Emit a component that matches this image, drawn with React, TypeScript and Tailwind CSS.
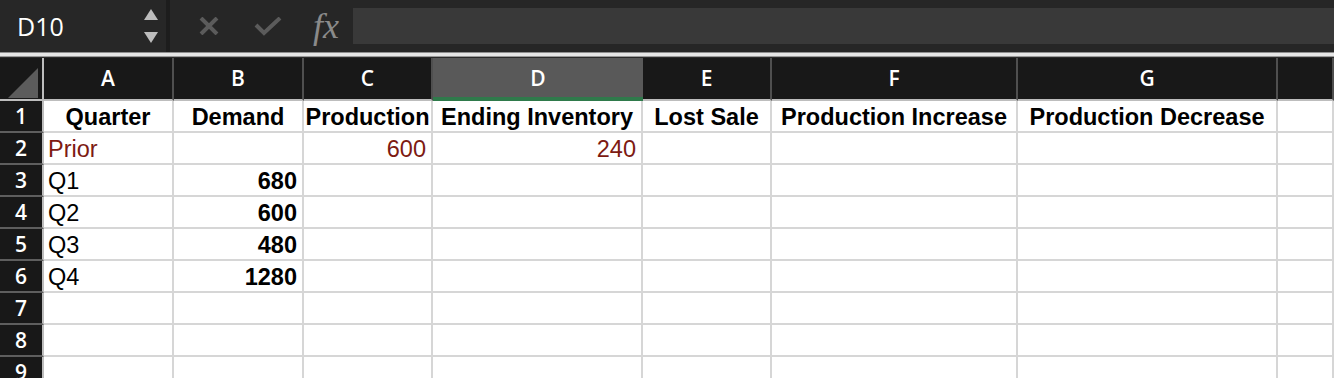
const cols = ["A", "B", "C", "D", "E", "F", "G", ""];

type Cell = { t?: string; bold?: boolean; red?: boolean; align?: "l" | "c" | "r" };

const headerRow: Cell[] = [
  "Quarter",
  "Demand",
  "Production",
  "Ending Inventory",
  "Lost Sale",
  "Production Increase",
  "Production Decrease",
  "",
].map((t) => ({ t, bold: true, align: "c" as const }));

const rows: Cell[][] = [
  headerRow,
  [{ t: "Prior", red: true }, {}, { t: "600", red: true, align: "r" }, { t: "240", red: true, align: "r" }],
  [{ t: "Q1" }, { t: "680", bold: true, align: "r" }],
  [{ t: "Q2" }, { t: "600", bold: true, align: "r" }],
  [{ t: "Q3" }, { t: "480", bold: true, align: "r" }],
  [{ t: "Q4" }, { t: "1280", bold: true, align: "r" }],
  [],
  [],
  [],
];

const Toolbar = () => (
  <div className="flex h-[52px] bg-[#262626]">
    <div className="flex w-[166px] items-center justify-between bg-[#272727] pl-[17px] pr-[8px]">
      <span className="pt-[1px] font-['Open_Sans',sans-serif] text-[25px] leading-none text-white">D10</span>
      <div className="flex flex-col gap-[12px]">
        <svg width="14" height="11" viewBox="0 0 14 11">
          <polygon points="7,0 14,11 0,11" fill="#bdbdbd" />
        </svg>
        <svg width="14" height="11" viewBox="0 0 14 11">
          <polygon points="0,0 14,0 7,11" fill="#bdbdbd" />
        </svg>
      </div>
    </div>
    <div className="w-[4px] bg-[#1d1d1d]" />
    <div className="ml-[28px] flex items-center">
      <svg width="22" height="18" viewBox="0 0 22 18">
        <path d="M3 1 L19 17 M19 1 L3 17" stroke="#5b5b5b" strokeWidth="4" />
      </svg>
    </div>
    <div className="ml-[34px] flex items-center">
      <svg width="28" height="19" viewBox="0 0 28 19">
        <polyline points="2,8 10,16 26,1" fill="none" stroke="#5b5b5b" strokeWidth="4" />
      </svg>
    </div>
    <div className="ml-[31px] flex items-center">
      <span className="font-['Liberation_Serif',serif] text-[36px] italic leading-none text-[#8a8a8a]">fx</span>
    </div>
    <div className="my-[8px] ml-[14px] flex-1 bg-[#393939]" />
  </div>
);

export default function App() {
  return (
    <div className="h-screen w-full overflow-hidden bg-white">
      <Toolbar />
      <div className="h-[1px] bg-[#8f8f8f]" />
      <div className="h-[3px] bg-[#e6e6e6]" />
      <div className="h-[1px] bg-[#9a9a9a]" />
      <div className="h-[1px] bg-[#2a2a2a]" />
      <div className="grid grid-cols-[44px_130px_130px_129px_210px_129px_246px_260px_1fr]">
        <div className="flex h-[43px] items-end justify-end border-r-2 border-b-2 border-[#bdbdbd] bg-[#181818] pr-[4px] pb-[1px]">
          <svg width="30" height="30" viewBox="0 0 30 30">
            <polygon points="30,0 30,30 0,30" fill="#5c5c5c" />
          </svg>
        </div>
        {cols.map((c, i) => (
          <div
            key={i}
            className={
              c === "D"
                ? "flex h-[43px] items-center justify-center border-b-[4px] border-[#2f7a4b] bg-[#595959] pt-[2px] font-['Open_Sans',sans-serif] text-[21px] font-semibold text-white"
                : "flex h-[43px] items-center justify-center border-r-2 border-b-2 border-r-[#4f4f4f] border-b-[#bdbdbd] bg-[#181818] font-['Open_Sans',sans-serif] text-[21px] font-semibold text-white"
            }
          >
            {c}
          </div>
        ))}
        {rows.map((r, ri) => (
          <Row key={ri} n={ri + 1} cells={r} />
        ))}
      </div>
    </div>
  );
}

const Row = ({ n, cells }: { n: number; cells: Cell[] }) => (
  <>
    <div className="flex h-[32px] items-center justify-center border-r-2 border-b-2 border-r-[#bdbdbd] border-b-[#5e5e5e] bg-[#181818] pt-[2px] font-['Open_Sans',sans-serif] text-[21px] font-semibold text-white">
      {n}
    </div>
    {cols.map((_, i) => {
      const c = cells[i] || {};
      return (
        <div
          key={i}
          className={[
            "flex h-[32px] items-center overflow-visible whitespace-nowrap border-r-2 border-b-2 border-[#d6d6d6] pt-[4px] font-['Liberation_Sans',Arial,sans-serif] text-[23.5px] leading-none",
            c.align === "c" ? "justify-center" : c.align === "r" ? "justify-end pr-[5px]" : "justify-start pl-[4px]",
            c.bold ? "font-bold" : "",
            c.red ? "text-[#7d1a12]" : "text-black",
          ].join(" ")}
        >
          {c.t}
        </div>
      );
    })}
  </>
);
